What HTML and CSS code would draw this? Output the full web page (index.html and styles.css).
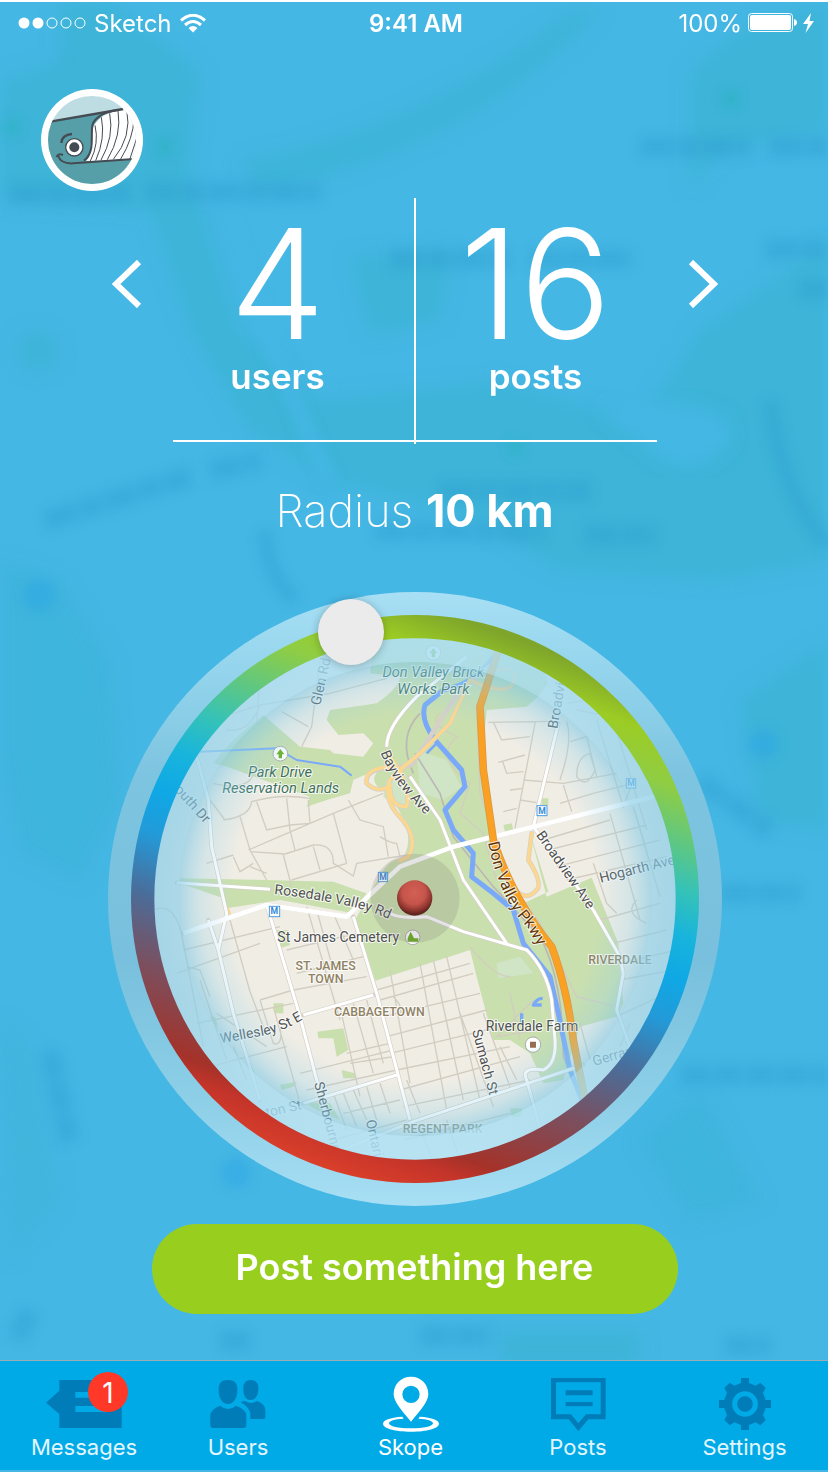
FILE: index.html
```html
<!DOCTYPE html>
<html lang="en">
<head>
<meta charset="utf-8">
<meta name="viewport" content="width=device-width, initial-scale=1">
<title>Skope</title>
<link rel="stylesheet" href="styles.css">
</head>
<body>
<div class="app">
  <svg class="backdrop" viewBox="0 0 828 1472" preserveAspectRatio="xMidYMid slice" aria-hidden="true">
    <defs>
      <filter id="soft" x="-20%" y="-20%" width="140%" height="140%"><feGaussianBlur stdDeviation="9"/></filter>
      <filter id="ink" x="-20%" y="-50%" width="140%" height="200%"><feGaussianBlur stdDeviation="6"/></filter>
    </defs>
    <rect width="828" height="1472" fill="#45b7e4"/>
    <g filter="url(#soft)" fill="#3cb4d8">
      <path d="M60 0L110 0L200 70L190 170L240 330L320 400L500 380L640 420L700 330L828 240L828 560L720 580L560 570L480 520L330 480L250 430L190 330L150 210L0 200L0 80L60 60Z"/>
      <path d="M690 70L740 30L828 0L828 130L720 150L690 190Z"/>
      <path d="M240 160Q420 130 570 10L600 10Q470 150 260 190Z"/>
      <path d="M350 255L450 250L440 320L370 335Z"/>
      <path d="M0 560L60 580L110 660L120 800L80 880L20 850L0 760Z" opacity=".7"/>
      <path d="M740 700L828 640L828 830L760 820Z"/>
      <path d="M640 1140L700 1090L760 1200L690 1220Z" opacity=".7"/>
      <path d="M500 1330L640 1330L640 1365L500 1365Z"/>
      <path d="M0 1020L30 1040L60 1200L10 1260Z" opacity=".5"/>
      <circle cx="38" cy="350" r="20"/>
    </g>
    <path d="M620 400Q740 400 730 440Q690 490 640 440L600 410" fill="#45b7e4" filter="url(#soft)"/>
    <path d="M225 210Q260 330 330 480" fill="none" stroke="#45b7e4" stroke-width="14" filter="url(#ink)"/>
    <g filter="url(#ink)" fill="none" stroke="#2f9fd0" stroke-width="20" opacity=".42">
      <path d="M10 193H130M145 191H320M640 146H750M770 146H828M390 258H510M530 258H632M765 248H828M800 288H828M45 520L190 475M210 470L260 460M440 490H590M375 530H545M585 534H655" stroke-dasharray="34 3 22 3"/>
      <path d="M700 780L770 830M690 892H800M680 1074H828M50 1050L70 1140M30 1310L15 1340M220 1340H250M420 1335H490M725 1345H770" stroke-dasharray="30 3"/>
      <path d="M770 400Q780 490 828 545M265 530Q265 570 295 600" stroke-width="14"/>
    </g>
    <g filter="url(#ink)" fill="#2fb3c4" opacity=".9"><circle cx="165" cy="146" r="8"/><circle cx="12" cy="126" r="8"/><circle cx="731" cy="98" r="8"/><circle cx="515" cy="447" r="7"/></g>
    <g filter="url(#ink)" fill="#2ba5e6" opacity=".5"><circle cx="39" cy="594" r="16"/><circle cx="763" cy="743" r="15"/><circle cx="236" cy="1172" r="15"/></g>
  </svg>

  <header class="status">
    <div class="carrier">
      <svg class="signal" viewBox="0 0 68 12" aria-hidden="true"><circle cx="6" cy="6" r="5.500" fill="#fff"/><circle cx="20" cy="6" r="5.500" fill="#fff"/><g fill="none" stroke="#fff"><circle cx="34" cy="6" r="5"/><circle cx="48" cy="6" r="5"/><circle cx="62" cy="6" r="5"/></g></svg>
      <span>Sketch</span>
      <svg class="wifi" viewBox="0 0 26 19" aria-hidden="true"><g fill="none" stroke="#fff" stroke-width="3"><path d="M1 6.500Q13 -4 25 6.500"/><path d="M5 11Q13 4 21 11"/></g><path d="M8.500 14Q13 10 17.500 14L13 18.500Z" fill="#fff"/></svg>
    </div>
    <span class="clock">9:41 AM</span>
    <div class="power">
      <span>100%</span>
      <svg class="battery" viewBox="0 0 49 20" aria-hidden="true"><rect x=".5" y=".5" width="44" height="18" rx="3" fill="none" stroke="#fff"/><rect x="2" y="2" width="41" height="15" rx="2" fill="#fff"/><path d="M46 6Q49 7 49 9.500T46 13Z" fill="#fff"/></svg>
      <svg class="bolt" viewBox="0 0 11 20" aria-hidden="true"><path d="M8 0L0 11H5L2.500 20L11 8H6.500Z" fill="#fff"/></svg>
    </div>
  </header>

  <main class="content">
    <a class="avatar" href="#profile" aria-label="Profile">
      <svg viewBox="33 27 306 306" aria-hidden="true">
        <defs><clipPath id="face"><circle cx="186" cy="180" r="132"/></clipPath></defs>
        <circle cx="186" cy="180" r="153" fill="#fff"/>
        <g clip-path="url(#face)">
          <rect x="40" y="40" width="300" height="290" fill="#bddde3"/>
          <path d="M50 124L225 98L190 135L175 244L330 236V330H40Z" fill="#579fa8"/>
          <path d="M278 87L325 80V236L168 243Q195 215 187 165Q184 108 278 87Z" fill="#fff"/>
          <path d="M65 124L280 87" stroke="#454b52" stroke-width="7"/>
          <path d="M265 89Q187 103 186 145C184 180 191 220 162 242" fill="none" stroke="#454b52" stroke-width="6"/>
          <g fill="none" stroke="#454b52" stroke-width="3"><path d="M195 136Q208 190 181 243M214 112Q227 175 197 242M239 100Q253 170 213 240M264 92Q276 165 232 239M290 88Q307 170 250 238M312 115Q310 175 272 237M320 175L300 236"/></g>
          <path d="M85 228Q92 252 130 250L312 237" fill="none" stroke="#454b52" stroke-width="6"/>
          <path d="M79 231Q86 219 99 225" fill="none" stroke="#454b52" stroke-width="6"/>
          <path d="M94 189Q96 164 126 162" fill="none" stroke="#454b52" stroke-width="7"/>
          <circle cx="133" cy="202" r="26" fill="#fff" stroke="#454b52" stroke-width="4"/><circle cx="133" cy="202" r="15" fill="#454b52"/>
        </g>
      </svg>
    </a>

    <section class="stats" aria-label="Nearby">
      <button class="arrow" type="button" aria-label="Previous"><svg viewBox="0 0 30 48" aria-hidden="true"><path d="M27 2L4 24L27 46" /></svg></button>
      <div class="stat"><strong class="number">4</strong><span class="unit">users</span></div>
      <div class="stat stat-right"><strong class="number">16</strong><span class="unit">posts</span></div>
      <button class="arrow next" type="button" aria-label="Next"><svg viewBox="0 0 30 48" aria-hidden="true"><path d="M3 2L26 24L3 46"/></svg></button>
    </section>
    <hr class="rule">

    <label class="radius" for="radius">Radius <b>10 km</b></label>

    <div class="dial">
      <svg class="map" viewBox="24 36 1842 1842" role="img" aria-label="Map of the area">
        <defs>
          <clipPath id="disc"><circle cx="945" cy="957" r="785"/></clipPath>
          <linearGradient id="halo" x1="0" y1="0" x2="0" y2="1"><stop offset="0" stop-color="#a8dff4"/><stop offset=".1" stop-color="#98d7ee"/><stop offset=".3" stop-color="#7dc4e0"/><stop offset=".6" stop-color="#78c0dd"/><stop offset=".83" stop-color="#8dcfe7"/><stop offset="1" stop-color="#a8dff4"/></linearGradient>
          <linearGradient id="ring" gradientUnits="userSpaceOnUse" x1="1236" y1="156" x2="654" y2="1758">
            <stop offset=".01" stop-color="#7fa62b"/><stop offset=".08" stop-color="#9ccc24"/><stop offset=".16" stop-color="#8fcd44"/><stop offset=".324" stop-color="#35c2b8"/><stop offset=".4" stop-color="#18b4dc"/><stop offset=".476" stop-color="#0fa8e5"/><stop offset=".55" stop-color="#239ad8"/><stop offset=".654" stop-color="#4a6d9a"/><stop offset=".766" stop-color="#7a5060"/><stop offset=".9" stop-color="#a53229"/><stop offset=".935" stop-color="#c4342a"/><stop offset="1" stop-color="#da3f2a"/>
          </linearGradient>
          <radialGradient id="fade" gradientUnits="userSpaceOnUse" cx="945" cy="957" r="785"><stop offset=".7" stop-color="#8fd0e9" stop-opacity="0"/><stop offset=".82" stop-color="#8fd0e9" stop-opacity=".28"/><stop offset=".905" stop-color="#80c8e5" stop-opacity=".62"/><stop offset="1" stop-color="#80c8e5" stop-opacity=".7"/></radialGradient>
          <linearGradient id="sheen" x1="0" y1="0" x2="0" y2="1"><stop offset="0" stop-color="#bfe9f8" stop-opacity=".6"/><stop offset=".3" stop-color="#bfe9f8" stop-opacity=".1"/><stop offset=".7" stop-color="#bfe9f8" stop-opacity=".1"/><stop offset="1" stop-color="#bfe9f8" stop-opacity=".7"/></linearGradient>
          <radialGradient id="ball" cx=".48" cy=".35" r=".6"><stop offset="0" stop-color="#d36055"/><stop offset=".55" stop-color="#c5544a"/><stop offset=".85" stop-color="#8b352e"/><stop offset="1" stop-color="#632420"/></radialGradient>
          <path id="rosedale" d="M522 942Q640 955 715 972Q800 985 900 1032"/>
          <path id="pkwy" d="M1164 788Q1200 960 1280 1040L1400 1250"/>
          <path id="bayview" d="M842 518Q880 620 1000 725"/>
          <path id="wellesley" d="M362 1390L500 1365Q560 1350 630 1305"/>
        </defs>
        <circle cx="945" cy="957" r="921" fill="url(#halo)"/>
        <g clip-path="url(#disc)">
          <rect x="150" y="160" width="1600" height="1600" fill="#f0ede5"/>
          <g class="park">
            <path d="M825 160L1250 160Q1330 220 1342 310Q1320 350 1280 380L1160 390L1145 540L1180 770L1270 970L1345 935Q1320 850 1290 760L1340 950L1475 893L1555 1090L1570 1270L1550 1310L1440 1340L1430 1370L1390 1500L1330 1510L1290 1420L1230 1380L1180 1380L1130 1190L1110 1110L826 1202L765 1020L850 870Q880 830 905 840Q960 760 860 640Q790 600 850 560L760 600L750 640L680 660L620 680L630 650L380 560L340 550Q380 490 490 405L600 500L690 510L700 520L790 530L820 490L790 460L715 465L680 420L690 390L760 380L830 370Q900 320 900 290L810 280Z"/>
            <path d="M240 895L500 900L700 905L800 940L760 1000L540 960L380 985L370 955L240 910Z"/>
            <path d="M530 1050L565 1050L570 1095L540 1105ZM520 1270L550 1270V1300H525ZM652 1355L730 1345L745 1410L710 1430L700 1375H655ZM725 1470L765 1480V1495L730 1495ZM540 1515L590 1505L580 1520L545 1530ZM610 1565L690 1570L720 1620L650 1590ZM1230 1585H1265V1610H1235ZM330 1310H345L355 1345ZM1210 735L1235 730L1240 750L1215 755ZM1325 655H1345V675H1325Z"/>
            <path d="M950 510L1040 540L1085 620L1030 660L960 640Z" fill="#d0e4c6"/>
            <path d="M860 600L920 590L930 670L890 680L850 650Z" fill="#d0e4c6"/>
            <path d="M1190 1150L1260 1130L1300 1180L1195 1195Z" fill="#d0e4c6"/>
            <path d="M700 485L790 462L810 490L780 515L700 520Z" fill="#f0ede5"/>
          </g>
          <g class="lane">
            <path d="M370 410L480 375L690 340L860 295M660 240L635 440L605 500M545 395L625 440M480 280L470 430M380 450Q450 460 480 375M340 610Q420 630 450 600L480 550M370 720Q450 710 455 665Q540 640 630 655M330 660L375 720M420 710L450 810L500 900M470 665L500 750L570 735L630 730L625 660M560 655L570 750L585 810M445 810L700 700L850 640M450 815L555 822L640 795Q700 790 700 850L760 888L770 850L920 825M550 825L575 920M575 900L740 850M700 700L740 850M745 660L780 720L850 740L865 830M640 800L660 870M400 830L420 875L460 850M320 850L400 825M840 770Q870 790 890 790L900 830M450 860L500 880"/>
            <path d="M250 1110L540 1040M260 1160L300 1170L330 1250M290 1330L580 1270M350 1300L500 1400M230 1180L480 1090M390 1020L450 1235L490 1340M620 980L720 1320M650 990L700 1170M700 1000L760 1140M590 1180L790 1130M560 1110L770 1060M580 1230L800 1190M480 1260L580 1230M480 1260L520 1390Q550 1400 540 1340M520 1280L600 1570M330 1460L560 1400M400 1400L440 1500M600 1480L880 1410M620 1530L890 1470M720 1280L780 1550M760 1270L820 1480M800 1260L850 1450M740 1420L870 1390M750 1450L880 1430M300 1200L380 1440M160 990Q230 960 250 1090L310 1400"/>
            <path d="M830 1230L1110 1150M840 1260L1120 1180M850 1310L1140 1240M860 1370L1160 1290M870 1420L1200 1340M890 1470L1230 1400M900 1530L1260 1430M910 1580L1290 1500M870 1170L930 1510M960 1150L1040 1590M1000 1140L1090 1560M1040 1130L1140 1560M1080 1300L1180 1580M1150 1300L1230 1520M1200 1400L1250 1500M700 1540L740 1650M730 1540L770 1640M760 1530L800 1620M800 1520L830 1620M840 1510L870 1600M730 1600L900 1560M920 1500L960 1600M700 1680L920 1620M910 1680L1230 1600M960 1640L1000 1750M1040 1620L1080 1740M880 1250Q910 1280 900 1300"/>
            <path d="M1165 427L1350 424M1180 427L1205 480L1290 470M1195 547L1275 525M1208 545L1220 580L1270 575M1306 425L1245 745M1230 630L1270 625M1210 695L1250 685M1270 600L1390 610L1550 580M1260 660L1310 668M1380 670L1480 640L1580 615M1390 615L1415 695M1400 425Q1420 480 1380 600M1410 485L1460 470L1490 590M1470 520Q1430 530 1430 590Q1460 630 1485 570ZM1330 780L1530 720M1345 810L1640 735M1370 860L1680 780M1400 900L1700 830M1480 850L1520 970L1550 1000M1530 700L1620 1020M1600 680L1680 950M1500 1020L1680 970M1540 1090L1700 1050M1560 1150L1730 1110M1560 1200L1720 1170M1550 1310L1700 1240M1590 1330L1560 1400M1490 420L1570 680L1600 600M1540 420L1640 750M1400 370L1660 330M1430 390L1690 440M1610 960Q1570 1000 1640 1030M1440 1330L1470 1440M1130 370L1140 640L1180 760M1020 400Q980 430 1070 470Q1000 530 1110 610L1080 700L1150 760L1190 900M1270 960L1320 1030L1430 1250L1550 1280M1110 1100Q1180 1190 1230 1190M1300 1260L1190 1370L1310 1350M1230 1240L1260 1380"/>
          </g>
          <g fill="none" stroke="#bbb7b5" stroke-width="5"><path d="M945 520L1020 640L1060 770L1180 920L1320 1070Q1390 1200 1390 1430L1430 1530"/><path d="M960 400Q890 470 940 580"/></g>
          <g fill="none" stroke="#79a9f8" stroke-width="15" stroke-linejoin="round"><path d="M1180 230Q1130 310 1030 330L975 375Q960 420 1005 480L1085 570L1095 620L1035 690L1060 750L1120 820L1115 890L1180 940L1240 990L1270 1090L1350 1190L1375 1300L1410 1470L1450 1570"/><path d="M980 520L1010 490" stroke-width="8"/><path d="M1325 1275H1300Q1310 1255 1328 1255M1265 1300V1330" stroke-width="10"/><path d="M300 515L530 505L590 540L720 560L755 587" stroke-width="6"/></g>
          <g class="casing"><path d="M1230 210Q1180 250 1080 330L935 555L910 560L870 600Q850 650 890 700Q960 770 925 830L900 842"/><path d="M910 560Q790 560 800 610Q830 640 870 620Q870 680 920 680Q930 640 900 570L960 520L1050 430L1110 300Q1240 360 1245 290Q1230 240 1160 290"/><path d="M1295 760L1285 840Q1330 910 1310 930Q1280 965 1245 930"/></g>
          <g class="yellow"><path d="M910 560L870 600Q850 650 890 700Q960 770 925 830L900 842"/><path d="M865 520L890 560Q790 560 800 610Q830 640 870 620Q870 680 920 680Q930 640 900 570L960 520L1050 430L1110 300Q1240 360 1245 290Q1230 240 1160 290"/><path d="M1295 760L1285 840Q1330 910 1310 930Q1280 965 1245 930"/><path d="M382 985L388 1000"/></g>
          <g class="casing thick"><path d="M250 1060L500 975L740 1010L900 860L1060 800L1300 740L1680 645"/><path d="M290 530L325 660L335 800L380 1000L355 1110L400 1300L480 1560M325 1020L355 1110M500 975L600 1310L700 1690M760 1010L830 1240L930 1620M230 908L510 928M610 1570L890 1485M610 1305L820 1245M870 1000Q900 1018 980 1010L1090 1055L1280 1110Q1340 1170 1355 1260L1365 1380Q1370 1450 1330 1470Q1260 1460 1280 1500L1330 1680M700 1720L940 1625L1450 1455M930 590L1020 720L1090 900L1220 1090M1375 430L1300 740Q1440 930 1480 990L1560 1130L1570 1180L1550 1290L1590 1400M860 500Q860 440 950 350L1100 230"/></g>
          <g class="road"><path class="main" d="M250 1060L500 975L740 1010L900 860L1060 800L1300 740L1680 645"/><path d="M290 530L325 660L335 800L380 1000L355 1110L400 1300L480 1560M325 1020L355 1110M500 975L600 1310L700 1690M760 1010L830 1240L930 1620M230 908L510 928M610 1570L890 1485M610 1305L820 1245M870 1000Q900 1018 980 1010L1090 1055L1280 1110Q1340 1170 1355 1260L1365 1380Q1370 1450 1330 1470Q1260 1460 1280 1500L1330 1680M700 1720L940 1625L1450 1455M930 590L1020 720L1090 900L1220 1090M1375 430L1300 740Q1440 930 1480 990L1560 1130L1570 1180L1550 1290L1590 1400M860 500Q860 440 950 350L1100 230"/></g>
          <path d="M1195 210L1140 380L1150 570L1180 780Q1240 960 1355 1100Q1400 1220 1420 1380L1455 1560" fill="none" stroke="#d99a4a" stroke-width="23"/>
          <path d="M1195 210L1140 380L1150 570L1180 780Q1240 960 1355 1100Q1400 1220 1420 1380L1455 1560" fill="none" stroke="#faa023" stroke-width="18"/>
          <g class="spot"><circle cx="541" cy="521" r="22"/><circle cx="1000" cy="218" r="22"/><circle cx="938" cy="1072" r="22"/><circle cx="1299" cy="1394" r="23"/></g>
          <g fill="#69ad1d"><path d="M541 507L553 523H546V535H536V523H529ZM1000 204L1012 220H1005V232H995V220H988Z"/><path d="M932 1055L942 1075H955V1085H923V1075Z"/></g><path d="M1290 1385H1308V1403H1290Z" fill="#96694b"/>
          <g class="metro"><rect x="835" y="877" width="28" height="28"/><rect x="508" y="979" width="31" height="31"/><rect x="1311" y="677" width="30" height="30"/><rect x="1579" y="596" width="28" height="28"/><text x="849" y="900">M</text><text x="523" y="1003">M</text><text x="1326" y="701">M</text><text x="1593" y="619">M</text></g>
          <g class="place park-name"><text x="1000" y="290">Don Valley Brick</text><text x="1000" y="341">Works Park</text><text x="540" y="590">Park Drive</text><text x="542" y="640">Reservation Lands</text></g>
          <g class="place street"><text transform="translate(660 378) rotate(-77)">Glen Rd</text><text transform="translate(1372 448) rotate(-80)">Broadview</text><text transform="translate(222 630) rotate(48)">outh Dr</text><text transform="translate(1307 765) rotate(55)">Broadview Ave</text><text transform="translate(1502 908) rotate(-14)">Hogarth Ave</text><text transform="translate(1116 1352) rotate(75)">Sumach St</text><text transform="translate(642 1510) rotate(75)">Sherbourne</text><text transform="translate(500 1612) rotate(-13)">ton St</text><text transform="translate(797 1622) rotate(77)">Ontario St</text><text transform="translate(1482 1458) rotate(-16)">Gerrard</text><text><textPath href="#rosedale">Rosedale Valley Rd</textPath></text><text><textPath href="#bayview">Bayview Ave</textPath></text><text><textPath href="#wellesley">Wellesley St E</textPath></text><text class="highway"><textPath href="#pkwy">Don Valley Pkwy</textPath></text></g>
          <g class="place point"><text x="532" y="1087">St James Cemetery</text><text x="1157" y="1353">Riverdale Farm</text></g>
          <g class="place district"><text x="677" y="1169">ST. JAMES</text><text x="677" y="1208">TOWN</text><text x="838" y="1309">CABBAGETOWN</text><text x="1560" y="1153">RIVERDALE</text><text x="1028" y="1658">REGENT PARK</text></g>
          <circle cx="945" cy="957" r="785" fill="url(#fade)"/>
          <path fill="url(#sheen)" fill-rule="evenodd" d="M160 957A785 785 0 1 1 1730 957A785 785 0 1 1 160 957ZM234 957A711 711 0 1 1 1656 957A711 711 0 1 1 234 957Z"/>
        </g>
        <circle cx="945" cy="957" r="817" fill="none" stroke="url(#ring)" stroke-width="70"/>
        <circle cx="945" cy="955" r="134" fill="#777" opacity=".2"/>
        <circle cx="944" cy="954" r="53" fill="url(#ball)"/>
      </svg>
      <input class="slider" id="radius" type="range" min="0" max="26" value="10">
    </div>

    <button class="post" type="button">Post something here</button>
  </main>

  <nav class="tabs" aria-label="Main">
    <a class="tab" href="#messages"><span class="glyph"><span class="badged"><svg width="76" height="48" viewBox="138 90 228 144" aria-hidden="true"><path fill-rule="evenodd" d="M178 90H365V234H178V192L138 158L178 122ZM226 126V143H330V126ZM226 168V186H330V168Z"/></svg><span class="badge">1</span></span></span><span>Messages</span></a>
    <a class="tab" href="#users"><span class="glyph"><svg width="56" height="48" viewBox="644 90 168 144" aria-hidden="true"><path d="M698 90C718 90 727 101 726 120C726 145 715 162 698 162S670 145 670 120C669 101 678 90 698 90ZM766 90C782 90 790 101 789 117C789 137 780 150 766 150S744 137 744 117C743 101 751 90 766 90ZM674 167Q698 187 722 167Q752 178 753 196V225Q753 234 744 234H654Q645 234 645 225V196Q646 178 674 167ZM736 156L749 153Q766 165 785 153Q810 163 810 180V200Q810 207 802 207H765V190Q762 172 736 156Z"/></svg></span><span>Users</span></a>
    <a class="tab active" href="#skope" aria-current="page"><span class="glyph"><svg width="56" height="56" viewBox="0 0 168 168" aria-hidden="true"><path fill-rule="evenodd" d="M84 2C54 2 32 25 32 54C32 78 56 103 84 137C112 103 136 78 136 54C136 25 114 2 84 2ZM84 29A26 26 0 1 1 84 81A26 26 0 1 1 84 29Z"/><path fill-rule="evenodd" d="M58 122C20 124 0 133 0 143C0 157 37 167 84 167S168 157 168 143C168 133 148 124 110 122L106 128C134 129 150 135 150 142C150 151 122 157 84 157S18 151 18 142C18 135 34 129 62 128Z"/></svg></span><span>Skope</span></a>
    <a class="tab" href="#posts"><span class="glyph"><svg width="55" height="53" viewBox="411 86 165 159" aria-hidden="true"><path fill-rule="evenodd" d="M411 86H575V210H523L493 245L464 210H411ZM426 99V195H471L493 222L516 195H560V99Z"/><path d="M455 123H536V138H455ZM455 158H536V171H455Z"/></svg></span><span>Posts</span></a>
    <a class="tab" href="#settings"><span class="glyph"><svg width="52" height="52" viewBox="-78 -78 156 156" aria-hidden="true"><path d="M-12 -78H12V-63L32 -55L46 -64L62 -48L54 -34L62 -12H78V12H62L54 34L62 48L46 64L32 55L12 63V78H-12V63L-32 55L-46 64L-62 48L-54 34L-62 12H-78V-12H-62L-54 -34L-62 -48L-46 -64L-32 -55L-12 -63Z"/><circle r="31" fill="none" stroke="#00aae7" stroke-width="15"/></svg></span><span>Settings</span></a>
  </nav>
</div>
</body>
</html>
```

FILE: styles.css
```css
* { box-sizing: border-box; }
body { margin: 0; background: #45b7e4; color: #fff; font-family: Inter, "Liberation Sans", sans-serif; }
svg { display: block; }
.app { position: relative; min-height: 100vh; display: flex; flex-direction: column; border-top: 2px solid #fff; padding-bottom: 2px; overflow: hidden; }
.backdrop { position: absolute; inset: 0; width: 100%; height: 100%; }

.status { position: relative; display: grid; grid-template-columns: 1fr auto 1fr; align-items: center; height: 42px; padding: 0 14px 0 18px; font-size: 24px; }
.carrier, .power { display: flex; align-items: center; gap: 8px; }
.power { justify-content: flex-end; gap: 6px; }
.signal { width: 68px; height: 12px; }
.wifi { width: 26px; height: 19px; }
.battery { width: 49px; height: 20px; }
.bolt { width: 11px; height: 20px; }
.clock { font-weight: 600; }

.content { position: relative; flex: 1; display: flex; flex-direction: column; align-items: center; padding: 0 23px 0 24px; }
.avatar { align-self: flex-start; width: 102px; margin: 45px 0 0 17px; }
.stats { width: 100%; max-width: 606px; margin-top: 7px; display: grid; grid-template-columns: 30px 272fr 242fr 62px; }
.arrow { align-self: start; margin-top: 62px; padding: 0; border: 0; background: none; cursor: pointer; }
.arrow svg { width: 30px; height: 48px; fill: none; stroke: #fff; stroke-width: 6; }
.next { justify-self: end; }
.stat { display: flex; flex-direction: column; align-items: center; height: 246px; padding-top: 26px; }
.stat-right { border-left: 2px solid #fff; }
.number { font-size: 152px; line-height: 120px; font-weight: 300; }
.unit { font-size: 35px; line-height: 40px; font-weight: 600; margin-top: 12px; }
.rule { width: 100%; max-width: 484px; height: 2px; margin: -4px 0 0; border: 0; background: #fff; }
.radius { margin-top: 41px; font-size: 45px; line-height: 56px; font-weight: 200; }
.radius b { font-weight: 700; }

.dial { position: relative; width: 100%; max-width: 614px; margin-top: 53px; }
.map { width: 100%; height: auto; font-family: Roboto, sans-serif; }
.slider { position: absolute; top: 7px; left: 0; width: 100%; height: 66px; margin: 0; appearance: none; background: none; }
.slider::-webkit-slider-runnable-track { height: 66px; background: none; }
.slider::-webkit-slider-thumb { appearance: none; width: 66px; height: 66px; border-radius: 50%; background: #ebebeb; box-shadow: 0 1px 8px rgba(0, 0, 0, .25); }

.park { fill: #cadfae; }
.lane { fill: none; stroke: #d2cdc1; stroke-width: 4; }
.casing { fill: none; stroke: #d5d0c8; stroke-width: 14; stroke-linejoin: round; }
.thick { stroke-width: 13; }
.road { fill: none; stroke: #fff; stroke-width: 9; stroke-linejoin: round; }
.main { stroke-width: 14; }
.casing, .yellow { stroke-linecap: round; }
.yellow { fill: none; stroke: #fbd88d; stroke-width: 10; }
.spot { fill: #fff; stroke: #aaa; stroke-width: 3; }
.metro rect { fill: #fff; stroke: #4b9be0; stroke-width: 3; }
.metro text { fill: #3589d8; font-size: 26px; font-weight: 700; text-anchor: middle; }
.place { fill: #505050; stroke: #fff; stroke-opacity: .8; stroke-width: 6; paint-order: stroke; font-size: 42px; }
.park-name { fill: #41705a; font-style: italic; text-anchor: middle; font-size: 44px; }
.highway { fill: #633608; font-size: 48px; }
.district { fill: #8f8263; font-size: 37px; font-weight: 500; text-anchor: middle; }

.post { width: 100%; max-width: 526px; height: 90px; margin-top: 18px; padding: 0 0 4px; border: 0; border-radius: 45px; background: #98cf1f; color: #fff; font: inherit; font-size: 36px; font-weight: 600; cursor: pointer; }

.tabs { position: relative; display: grid; grid-template-columns: 132fr 176fr 169fr 166fr 167fr; padding: 15px 0 7px 18px; border-top: 1px solid #9cabb4; background: #00aae7; }
.tab { display: flex; flex-direction: column; align-items: center; color: #e3f5fd; fill: #007cb8; text-decoration: none; font-size: 22px; line-height: 31px; }
.active { color: #fff; fill: #fff; }
.glyph { display: flex; align-items: center; height: 56px; }
.badged { position: relative; }
.badge { position: absolute; top: -8px; right: -6px; width: 40px; height: 40px; border-radius: 50%; background: #ff3828; color: #fff; font-size: 28px; line-height: 42px; text-align: center; }
```
